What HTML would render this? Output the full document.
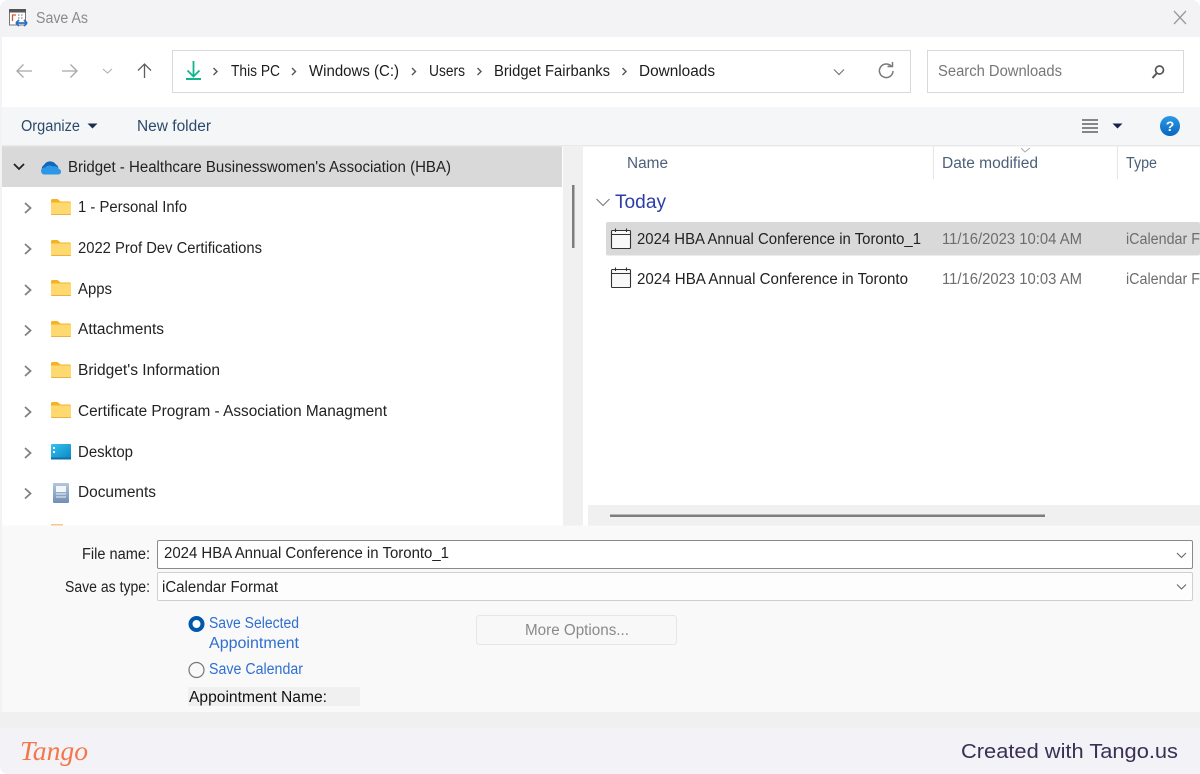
<!DOCTYPE html>
<html><head><meta charset="utf-8"><title>Save As</title>
<style>
html,body{margin:0;padding:0;background:#fff;width:1200px;height:774px;overflow:hidden}
svg{display:block;filter:blur(.3px)}
text{font-family:"Liberation Sans",sans-serif;font-size:15.5px;fill:#1c1c1c}
</style></head><body>
<svg width="1200" height="774" viewBox="0 0 1200 774" xmlns="http://www.w3.org/2000/svg">
<defs>
<linearGradient id="deskG" x1="0" y1="0" x2="1" y2="1"><stop offset="0" stop-color="#35c3ee"/><stop offset="1" stop-color="#0b86c4"/></linearGradient>
<linearGradient id="docG" x1="0" y1="0" x2="0" y2="1"><stop offset="0" stop-color="#b4c6dc"/><stop offset="1" stop-color="#6f8fb4"/></linearGradient>
<linearGradient id="helpG" x1="0" y1="0" x2="0" y2="1"><stop offset="0" stop-color="#2a9ae6"/><stop offset="1" stop-color="#0a66bd"/></linearGradient>
<g id="fold"><path d="M0 1.500a1.500 1.500 0 0 1 1.500-1.500h5l3 2.500h9a1.500 1.500 0 0 1 1.500 1.500v1H0z" fill="#f5b324"/><path d="M0 3.500h20v11.500a1 1 0 0 1-1 1H1a1 1 0 0 1-1-1z" fill="#fdd96f"/><path d="M0 15h20v.2a1 1 0 0 1-1 .8H1a1 1 0 0 1-1-.8z" fill="#eeb040"/></g>
<path id="chev" d="M-3-5L2.500 0L-3 5" fill="none" stroke="#808080" stroke-width="1.800"/>
<path id="crumb" d="M-2-3.500L1.500 0L-2 3.500" fill="none" stroke="#555" stroke-width="1.400"/>
<g id="cal"><rect x="0.500" y="2.500" width="19" height="18" rx="1" fill="#f8f8f8" stroke="#333" stroke-width="1.100"/><path d="M0.500 6.500h19M4.500 0.500v3.500M15.500 0.500v3.500" stroke="#333" stroke-width="1.100" fill="none"/></g>
</defs>

<rect width="1200" height="774" fill="#fff"/>
<path d="M8 0H1192a8 8 0 0 1 8 8V774H8a8 8 0 0 1-8-8V8a8 8 0 0 1 8-8z" fill="#f3f3f5"/>
<rect x="2" y="37" width="1198" height="70" fill="#fff"/>
<rect x="2" y="107" width="1198" height="39" fill="#f5f6f7"/>
<rect x="2" y="146" width="1198" height="380" fill="#fff"/>
<rect x="2" y="145" width="1198" height="1.500" fill="#e9e9ea"/>
<rect x="2" y="146.500" width="560" height="40.500" fill="#d9d9d9"/>
<rect x="563" y="146" width="20" height="380" fill="#f0f0f0"/>
<rect x="572" y="185" width="2.500" height="63" fill="#7d7d7d"/>
<rect x="588" y="505" width="612" height="21" fill="#f0f0f0"/>
<rect x="610" y="514.500" width="435" height="2.500" fill="#7d7d7d"/>
<rect x="2" y="525.500" width="1198" height="187" fill="#f9f9f9"/>
<rect x="0" y="712" width="1200" height="16" fill="#f0f0f0"/>
<path d="M0 728H1200V774H8a8 8 0 0 1-8-8z" fill="#f3f2f7"/>

<!-- title bar -->
<rect x="9.500" y="10" width="16" height="15" fill="#fff" stroke="#777" stroke-width="1"/>
<rect x="9" y="9" width="17" height="3.500" fill="#555"/>
<path d="M12.500 21v-6h3.500" stroke="#d5592c" stroke-width="1.300" fill="none"/>
<path d="M18 15h1.500M21 15h1.500M18 18h1.500M21 18h1.500" stroke="#888" stroke-width="1.200"/>
<path d="M16 23h11M16 23l3-3M16 23l3 3M27 23l-3-3M27 23l-3 3" stroke="#2a6fc0" stroke-width="1.800" fill="none"/>
<text x="36" y="23" textLength="52" lengthAdjust="spacingAndGlyphs" style="fill:#8a8a8a">Save As</text>
<path d="M1174 11l12 13M1186 11l-12 13" stroke="#9a9a9a" stroke-width="1.300"/>

<!-- nav -->
<path d="M32 71H17M23.500 64.500L17 71l6.500 6.500" fill="none" stroke="#a8a8a8" stroke-width="1.300"/>
<path d="M62 71h15M70.500 64.500L77 71l-6.500 6.500" fill="none" stroke="#a8a8a8" stroke-width="1.300"/>
<path d="M103 69l4.500 4 4.500-4" fill="none" stroke="#b0b0b0" stroke-width="1.100"/>
<path d="M144.500 78V64M138 70.500l6.500-6.500 6.500 6.500" fill="none" stroke="#5e5e5e" stroke-width="1.300"/>
<rect x="172.500" y="50.500" width="738" height="42" fill="#fff" stroke="#d9d9d9"/>
<path d="M193.500 61v15M187.500 70.500l6 6 6-6" fill="none" stroke="#10b58a" stroke-width="1.800"/>
<rect x="186" y="78" width="15" height="2" fill="#10b58a"/>
<use href="#crumb" x="215.500" y="71.500"/>
<text x="231" y="76" textLength="49" lengthAdjust="spacingAndGlyphs">This PC</text>
<use href="#crumb" x="294" y="71.500"/>
<text x="309" y="76" textLength="90" lengthAdjust="spacingAndGlyphs">Windows (C:)</text>
<use href="#crumb" x="414" y="71.500"/>
<text x="429" y="76" textLength="36" lengthAdjust="spacingAndGlyphs">Users</text>
<use href="#crumb" x="479.500" y="71.500"/>
<text x="494" y="76" textLength="116" lengthAdjust="spacingAndGlyphs">Bridget Fairbanks</text>
<use href="#crumb" x="624.500" y="71.500"/>
<text x="639" y="76" textLength="76" lengthAdjust="spacingAndGlyphs">Downloads</text>
<path d="M834 69.500l5 5 5-5" fill="none" stroke="#777" stroke-width="1.200"/>
<path d="M891.500 66.500a6.800 6.800 0 1 0 1.500 4.500" fill="none" stroke="#7a7a7a" stroke-width="1.500"/>
<path d="M887.500 66.500h5v-4.500" fill="none" stroke="#7a7a7a" stroke-width="1.500"/>
<rect x="927.500" y="50.500" width="256" height="42" fill="#fff" stroke="#d9d9d9"/>
<text x="938" y="76" textLength="124" lengthAdjust="spacingAndGlyphs" style="fill:#777">Search Downloads</text>
<circle cx="1159.500" cy="70" r="4" fill="none" stroke="#555" stroke-width="1.700"/>
<path d="M1156.500 73.500l-4 4.500" stroke="#555" stroke-width="2"/>

<!-- organize bar -->
<text x="21" y="131" textLength="59" lengthAdjust="spacingAndGlyphs" style="fill:#2b4a6b">Organize</text>
<path d="M87.500 123.500h10l-5 5z" fill="#1a2e50"/>
<text x="137" y="131" textLength="74" lengthAdjust="spacingAndGlyphs" style="fill:#2b4a6b">New folder</text>
<path d="M1082 120h16M1082 124h16M1082 128h16M1082 132h16" stroke="#444" stroke-width="1.200"/>
<path d="M1112.500 123.500h10l-5 5z" fill="#1a2050"/>
<circle cx="1170" cy="126" r="10" fill="url(#helpG)"/>
<text x="1170" y="131" text-anchor="middle" style="fill:#fff;font-weight:700;font-size:14px">?</text>

<!-- tree -->
<path d="M14 164l5 5 5-5" fill="none" stroke="#222" stroke-width="1.800"/>
<path d="M42 170a4 4 0 0 1 2-5 7 7 0 0 1 12-.5 5 5 0 0 1 2.500 4z" fill="#1466b8"/>
<path d="M44 174.500a3.500 3.500 0 0 1-3-3.500 3.500 3.500 0 0 1 4-3.500 6 6 0 0 1 8-1 5 5 0 0 1 6 2.500 2.800 2.800 0 0 1 2 2.800 2.800 2.800 0 0 1-2.500 2.700z" fill="#2c97e6"/>
<text x="68" y="172" textLength="383" lengthAdjust="spacingAndGlyphs" style="fill:#222">Bridget - Healthcare Businesswomen's Association (HBA)</text>

<use href="#chev" x="28" y="208"/><use href="#fold" x="51" y="199"/>
<text x="78" y="212" textLength="109" lengthAdjust="spacingAndGlyphs" style="fill:#222">1 - Personal Info</text>
<use href="#chev" x="28" y="249"/><use href="#fold" x="51" y="240"/>
<text x="78" y="253" textLength="184" lengthAdjust="spacingAndGlyphs" style="fill:#222">2022 Prof Dev Certifications</text>
<use href="#chev" x="28" y="290"/><use href="#fold" x="51" y="280"/>
<text x="78" y="294" textLength="34" lengthAdjust="spacingAndGlyphs" style="fill:#222">Apps</text>
<use href="#chev" x="28" y="330.500"/><use href="#fold" x="51" y="321"/>
<text x="78" y="334" textLength="86" lengthAdjust="spacingAndGlyphs" style="fill:#222">Attachments</text>
<use href="#chev" x="28" y="371"/><use href="#fold" x="51" y="362"/>
<text x="78" y="375" textLength="142" lengthAdjust="spacingAndGlyphs" style="fill:#222">Bridget's Information</text>
<use href="#chev" x="28" y="412"/><use href="#fold" x="51" y="402"/>
<text x="78" y="416" textLength="309" lengthAdjust="spacingAndGlyphs" style="fill:#222">Certificate Program - Association Managment</text>
<use href="#chev" x="28" y="453"/>
<rect x="51" y="444" width="20" height="15" rx="1" fill="url(#deskG)"/>
<rect x="51" y="457.500" width="20" height="2" fill="#0b6fa8"/>
<rect x="53" y="447" width="2" height="2" fill="#fff"/><rect x="53" y="451" width="2" height="2" fill="#fff"/>
<text x="78" y="457" textLength="55" lengthAdjust="spacingAndGlyphs" style="fill:#222">Desktop</text>
<use href="#chev" x="28" y="493.500"/>
<rect x="53" y="483" width="16" height="20" rx="1" fill="url(#docG)"/>
<rect x="56" y="486" width="10" height="6" fill="#f2f5f9"/>
<path d="M56 494h10M56 497h10" stroke="#eef2f7" stroke-width="1"/>
<text x="78" y="497" textLength="78" lengthAdjust="spacingAndGlyphs" style="fill:#222">Documents</text>
<rect x="51" y="524" width="12" height="1.500" fill="#f5c98a"/>

<!-- list -->
<text x="627" y="168" textLength="41" lengthAdjust="spacingAndGlyphs" style="fill:#4c607a">Name</text>
<rect x="933" y="146" width="1" height="33" fill="#e5e5e5"/>
<path d="M1021 148l4 4 5-4" fill="none" stroke="#aaa" stroke-width="1"/>
<text x="942" y="168" textLength="96" lengthAdjust="spacingAndGlyphs" style="fill:#4c607a">Date modified</text>
<rect x="1117" y="146" width="1" height="33" fill="#e5e5e5"/>
<text x="1126" y="168" textLength="31" lengthAdjust="spacingAndGlyphs" style="fill:#4c607a">Type</text>
<path d="M596.500 199l6.500 6.500 6.500-6.500" fill="none" stroke="#777" stroke-width="1.100"/>
<text x="615" y="208" textLength="51" lengthAdjust="spacingAndGlyphs" style="font-size:19px;fill:#2c3fa8">Today</text>
<rect x="606" y="222" width="594" height="33.500" rx="2" fill="#d9d9d9"/>
<use href="#cal" x="611" y="228"/>
<text x="637" y="244" textLength="284" lengthAdjust="spacingAndGlyphs" style="fill:#222">2024 HBA Annual Conference in Toronto_1</text>
<text x="942" y="244" textLength="140" lengthAdjust="spacingAndGlyphs" style="fill:#6d6d6d">11/16/2023 10:04 AM</text>
<text x="1126" y="244" textLength="74" lengthAdjust="spacingAndGlyphs" style="fill:#6d6d6d">iCalendar F</text>
<use href="#cal" x="611" y="267"/>
<text x="637" y="284" textLength="271" lengthAdjust="spacingAndGlyphs" style="fill:#222">2024 HBA Annual Conference in Toronto</text>
<text x="942" y="284" textLength="140" lengthAdjust="spacingAndGlyphs" style="fill:#6d6d6d">11/16/2023 10:03 AM</text>
<text x="1126" y="284" textLength="74" lengthAdjust="spacingAndGlyphs" style="fill:#6d6d6d">iCalendar F</text>

<!-- form -->
<text x="82" y="559" textLength="68" lengthAdjust="spacingAndGlyphs" style="fill:#222">File name:</text>
<rect x="157.500" y="540.500" width="1035" height="28" rx="1.500" fill="#fff" stroke="#8a8a8a"/>
<text x="164" y="558" textLength="285" lengthAdjust="spacingAndGlyphs" style="fill:#222">2024 HBA Annual Conference in Toronto_1</text>
<path d="M1177 553l4.500 4.500 4.500-4.500" fill="none" stroke="#666" stroke-width="1.100"/>
<text x="65" y="592" textLength="85" lengthAdjust="spacingAndGlyphs" style="fill:#222">Save as type:</text>
<rect x="157.500" y="572.500" width="1035" height="28" rx="1.500" fill="#fdfdfd" stroke="#cfcfcf"/>
<text x="162" y="592" textLength="116" lengthAdjust="spacingAndGlyphs" style="fill:#222">iCalendar Format</text>
<path d="M1177 584.500l4.500 4.500 4.500-4.500" fill="none" stroke="#666" stroke-width="1.100"/>
<rect x="476.500" y="615.500" width="200" height="29" rx="3" fill="#f8f8f8" stroke="#e6e6e6"/>
<text x="525" y="635" textLength="104" lengthAdjust="spacingAndGlyphs" style="fill:#8a8a8a">More Options...</text>
<circle cx="196.500" cy="624" r="6" fill="#fff" stroke="#0058ad" stroke-width="4"/>
<text x="209" y="628" textLength="90" lengthAdjust="spacingAndGlyphs" style="fill:#2f6fd0">Save Selected</text>
<text x="209" y="648" textLength="90" lengthAdjust="spacingAndGlyphs" style="fill:#2f6fd0">Appointment</text>
<circle cx="196.500" cy="670" r="7.500" fill="#f9f9f9" stroke="#777" stroke-width="1.200"/>
<text x="209" y="674" textLength="94" lengthAdjust="spacingAndGlyphs" style="fill:#2f6fd0">Save Calendar</text>
<rect x="188" y="687" width="172" height="19" fill="#f0f0f0"/>
<text x="189" y="702" textLength="138" lengthAdjust="spacingAndGlyphs" style="fill:#111">Appointment Name:</text>

<!-- footer -->
<text x="20" y="760" textLength="68" lengthAdjust="spacingAndGlyphs" style="font-family:'Liberation Serif',serif;font-style:italic;font-size:27px;fill:#f4764a">Tango</text>
<text x="961" y="758" textLength="217" lengthAdjust="spacingAndGlyphs" style="font-size:20px;fill:#3a2f55">Created with Tango.us</text>
</svg>
</body></html>
